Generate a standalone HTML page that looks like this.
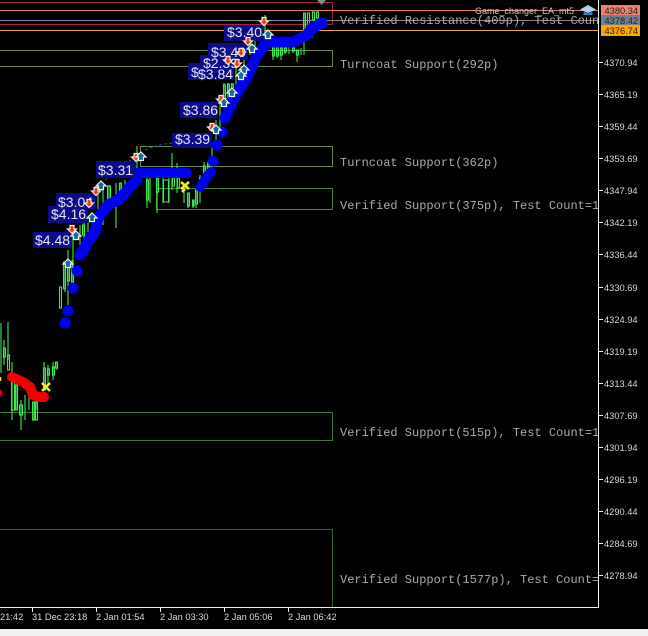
<!DOCTYPE html>
<html><head><meta charset="utf-8"><style>
html,body{margin:0;padding:0;background:#000;width:648px;height:636px;overflow:hidden}
svg{display:block}
.m{font-family:"Liberation Mono",monospace;font-size:12px;fill:#aaa}
.a{font-family:"Liberation Sans",sans-serif;font-size:9.3px;fill:#d8d8d8}
.p{font-family:"Liberation Sans",sans-serif;font-size:14px;fill:#e4e4f4}
.pb{fill:#0c0c88}
.c{stroke:#3fe850;stroke-width:1.100;fill:none}
</style></head><body>
<svg width="648" height="636" viewBox="0 0 648 636">
<rect width="648" height="636" fill="#000"/>
<rect y="629" width="648" height="7" fill="#f0f0f0"/>

<!-- zones -->
<g fill="none" stroke-width="1">
<rect x="-2" y="50.500" width="334.500" height="16" stroke="#6d8a3a"/>
<rect x="140.500" y="146.500" width="192" height="20" stroke="#6d8a3a"/>
<rect x="156.500" y="188.500" width="176" height="21" stroke="#3f8a30"/>
<rect x="-2" y="412.500" width="334.500" height="28" stroke="#2f7f2f"/>
<rect x="-2" y="529.500" width="334.500" height="78" stroke="#2a6e2a"/>
<rect x="-2" y="2.500" width="334.500" height="22" stroke="#a0283c"/>
</g>
<line x1="0" y1="10.500" x2="598" y2="10.500" stroke="#e87a70"/>
<line x1="0" y1="20.500" x2="598" y2="20.500" stroke="#8a8a8a"/>
<line x1="0" y1="30.500" x2="598" y2="30.500" stroke="#f0a050"/>
<path d="M317 0h9l-4.500 5z" fill="#8a8a8a"/>

<!-- candles -->
<g class="c">
<path d="M1 323v50M8 322v38M4 340v25M12 362v58M16 385v25M21 400v30M25 395v25M29 395v15M33 402v18M37 402v8M44 362v28M48 365v20M53 362v18M57 362v8"/>
<rect x="3.500" y="348" width="2" height="9"/><rect x="7.500" y="355" width="2" height="15"/><rect x="11.500" y="382" width="3" height="28"/><rect x="15.500" y="385" width="2" height="25"/><rect x="19.500" y="405" width="3" height="10"/><rect x="32.500" y="402" width="2" height="18"/><rect x="35.500" y="402" width="2" height="18"/><rect x="43.500" y="368" width="2" height="22"/><rect x="47.500" y="369" width="2" height="6"/><rect x="52.500" y="367" width="2" height="8"/><rect x="55.500" y="362" width="2" height="6"/>

<path d="M68 250v55M65 262v30M72 260v30"/>
<rect x="59.500" y="287" width="2" height="21"/><rect x="63.500" y="262" width="2" height="27"/><rect x="67.500" y="263" width="2" height="18"/><rect x="71.500" y="270" width="2" height="12"/>

<path d="M73 230v45M80 225v25M84 220v25M88 222v20M92 222v15M98 185v45M103 190v35M109 185v20M116 183v45M120 183v15M125 180v12M137 146v35M147 178v30M150 178v25M157 178v35M163 178v25M169 178v25M172 153v37M177 163v30M184 188v15M188 193v15M193 200v8M196 188v20M200 175v28M204 162v20M208 163v7M212 148v25M216 120v28"/>
<rect x="82.500" y="225" width="2" height="10"/><rect x="107.500" y="186" width="3" height="16"/><rect x="119.500" y="183" width="2" height="10"/><rect x="146.500" y="180" width="2" height="20"/><rect x="156.500" y="178" width="2" height="14"/><rect x="163.500" y="180" width="5" height="22"/><rect x="172.500" y="178" width="2" height="8"/><rect x="177.500" y="178" width="2" height="10"/><rect x="187.500" y="193" width="2" height="13"/><rect x="192.500" y="200" width="1.500" height="6"/><rect x="195.500" y="190" width="2" height="14"/><rect x="199.500" y="178" width="2" height="12"/><rect x="203.500" y="166" width="2" height="10"/><rect x="207.500" y="163" width="2" height="7"/>

<path d="M220 100v30M224 83v25M228 83v15M232 83v10M236 58v28M244 55v25M250 30v25M255 38v20M262 27v15M265 15v25"/>
<rect x="223.500" y="85" width="2" height="16"/><rect x="227.500" y="84" width="2" height="9"/><rect x="231.500" y="84" width="2" height="8"/>
<path d="M273 47v13M277 47v11M281 48v12M285 48v6M289 46v8M293 46v7M297 50v12M301 48v7M304 13v42M312 33v5"/>
<rect x="272.500" y="47" width="2" height="9"/><rect x="276.500" y="47" width="2" height="9"/><rect x="280.500" y="48" width="2" height="7"/><rect x="284.500" y="48" width="2" height="4"/><rect x="292.500" y="46" width="2" height="5"/><rect x="296.500" y="50" width="2" height="5"/><rect x="303.500" y="13" width="2" height="26"/><rect x="307.500" y="13" width="2" height="12"/><rect x="312.500" y="12" width="2" height="8"/><rect x="316.500" y="12" width="2" height="6"/>
</g>

<!-- blue dots -->
<g fill="#0000f0">
<circle cx="65" cy="323" r="5.500"/><circle cx="68" cy="311" r="5.500"/><circle cx="73" cy="288" r="5.500"/><circle cx="77" cy="271" r="5.500"/>
<circle cx="213" cy="161" r="5.500"/><circle cx="217" cy="145" r="5.500"/><circle cx="222" cy="132" r="5.500"/>
</g>
<g stroke="#0000f0" stroke-width="11" stroke-linecap="round" stroke-linejoin="round" fill="none">
<path d="M80 255l5-8 5-9 5-6 3-14"/>
<path d="M98 218l10-13 10-5 7-7 5-6 7-7"/>
<path d="M138 173h49" stroke-width="10"/>
<path d="M200 187l8-12 3-3" stroke-width="9.500"/>
<path d="M225 118l4-9 4-9 9-15 6-10 9-20 11-13h25l14-7 5-7 10-5"/>
</g>

<!-- red dots -->
<path d="M12 377l11 5 7 5 3 8 6 2h5" stroke="#f00000" stroke-width="10" stroke-linecap="round" stroke-linejoin="round" fill="none"/>
<circle cx="-1" cy="393" r="3.500" fill="#e00000"/>

<!-- dashed trend -->
<path d="M105 180q16-14 32-24M145 150q14-6 28-7" stroke="#1c4fb0" stroke-width="1" stroke-dasharray="3 2" fill="none"/>

<!-- yellow x -->
<g stroke="#f4f020" stroke-width="2.600" fill="none">
<path d="M42 383l8 8M50 383l-8 8M181 182l8 7M189 182l-8 7M185 189l-3 3M-2 377l3 2M-2 381l3-2"/>
</g>

<!-- price labels -->
<g>
<rect class="pb" x="56" y="193" width="39" height="16"/>
<rect class="pb" x="48" y="206" width="40" height="17"/>
<rect class="pb" x="33" y="232" width="39" height="16"/>
<rect class="pb" x="96" y="161" width="40" height="17"/>
<rect class="pb" x="172" y="133" width="40" height="15"/>
<rect class="pb" x="180" y="102" width="38" height="16"/>
<rect class="pb" x="188" y="63" width="46" height="17"/>
<rect class="pb" x="200" y="55" width="32" height="15"/>
<rect class="pb" x="208" y="43" width="40" height="17"/>
<rect class="pb" x="224" y="25" width="40" height="16"/>
<text class="p" x="58" y="207">$3.04</text>
<text class="p" x="51" y="219">$4.16</text>
<text class="p" x="35" y="245">$4.48</text>
<text class="p" x="98" y="175">$3.31</text>
<text class="p" x="175" y="144">$3.39</text>
<text class="p" x="183" y="115">$3.86</text>
<text class="p" x="191" y="77">$</text>
<text class="p" x="198" y="79">$3.84</text>
<text class="p" x="203" y="68">$2.39</text>
<text class="p" x="211" y="57">$3.49</text>
<text class="p" x="227" y="37">$3.40</text>
</g>

<!-- arrows -->
<defs>
<g id="up"><path d="M0 -5L5 0H2.500V3.500H-2.500V0H-5Z" fill="#106a9a" stroke="#f4f4f4" stroke-width="1.200"/></g>
<g id="dn"><path d="M0 4.500L4.500 0H2V-3.500H-2V0H-4.500Z" fill="#e0401a" stroke="#f4ece4" stroke-width="1.200"/></g>
</defs>
<use href="#dn" x="264" y="21"/><use href="#up" x="268" y="35"/>
<use href="#dn" x="248" y="41"/><use href="#up" x="252" y="49"/>
<use href="#dn" x="241" y="52"/><use href="#dn" x="228" y="60"/><use href="#dn" x="237" y="63"/>
<use href="#up" x="244" y="70"/><use href="#up" x="241" y="76"/><use href="#up" x="232" y="93"/>
<use href="#dn" x="221" y="99"/><use href="#up" x="224" y="103"/>
<use href="#dn" x="212" y="127"/><use href="#up" x="216" y="130"/>
<use href="#dn" x="136" y="157"/><use href="#up" x="141" y="157"/>
<use href="#up" x="101" y="186"/><use href="#dn" x="96" y="191"/>
<use href="#dn" x="89" y="203"/><use href="#up" x="92" y="218"/>
<use href="#dn" x="72" y="229"/><use href="#up" x="76" y="236"/>
<use href="#up" x="68" y="264"/>

<!-- zone labels -->
<text class="m" x="340" y="24">Verified Resistance(409p), Test Coun</text>
<text class="m" x="340" y="68">Turncoat Support(292p)</text>
<text class="m" x="340" y="166">Turncoat Support(362p)</text>
<text class="m" x="340" y="209">Verified Support(375p), Test Count=1</text>
<text class="m" x="340" y="436">Verified Support(515p), Test Count=1</text>
<text class="m" x="340" y="583">Verified Support(1577p), Test Count=</text>

<!-- top right -->
<text x="475" y="14" style="font-family:'Liberation Sans',sans-serif;font-size:9px;fill:#c8c8c8">Game_changer_EA_mt5</text>
<path d="M588 5l8 4.500-8 3.500-8-3.500z" fill="#a8d4f4"/><path d="M583.500 11.500v3.500h9v-3.500l-4.500 2z" fill="#3a7fd0"/>

<!-- axes -->
<rect x="598" y="0" width="1" height="608" fill="#f0f0f0"/>
<rect x="0" y="607" width="599" height="1" fill="#f0f0f0"/>
<rect x="601" y="5" width="39" height="10" fill="#f08070"/>
<rect x="601" y="15" width="39" height="10" fill="#708090"/>
<rect x="601" y="25" width="39" height="11" fill="#ffa500"/>
<g class="a">
<text x="604.500" y="14" style="fill:#222">4380.34</text>
<text x="604.500" y="24" style="fill:#222">4378.42</text>
<text x="604.500" y="34" style="fill:#222">4376.74</text>
<text x="604" y="66">4370.94</text><text x="604" y="98">4365.19</text><text x="604" y="130">4359.44</text>
<text x="604" y="162">4353.69</text><text x="604" y="194">4347.94</text><text x="604" y="226">4342.19</text>
<text x="604" y="258">4336.44</text><text x="604" y="291">4330.69</text><text x="604" y="323">4324.94</text>
<text x="604" y="355">4319.19</text><text x="604" y="387">4313.44</text><text x="604" y="419">4307.69</text>
<text x="604" y="451">4301.94</text><text x="604" y="483">4296.19</text><text x="604" y="515">4290.44</text>
<text x="604" y="547">4284.69</text><text x="604" y="579">4278.94</text>
</g>
<g stroke="#f0f0f0" stroke-width="1">
<path d="M599 62.500h4M599 94.500h4M599 126.500h4M599 158.500h4M599 190.500h4M599 222.500h4M599 254.500h4M599 287.500h4M599 319.500h4M599 351.500h4M599 383.500h4M599 415.500h4M599 447.500h4M599 479.500h4M599 511.500h4M599 543.500h4M599 575.500h4"/>
<path d="M32.500 608v4M96.500 608v4M160.500 608v4M224.500 608v4M288.500 608v4"/>
</g>
<g class="a">
<text x="0" y="620">21:42</text><text x="32" y="620">31 Dec 23:18</text><text x="96" y="620">2 Jan 01:54</text>
<text x="160" y="620">2 Jan 03:30</text><text x="224" y="620">2 Jan 05:06</text><text x="288" y="620">2 Jan 06:42</text>
</g>
</svg>
</body></html>
